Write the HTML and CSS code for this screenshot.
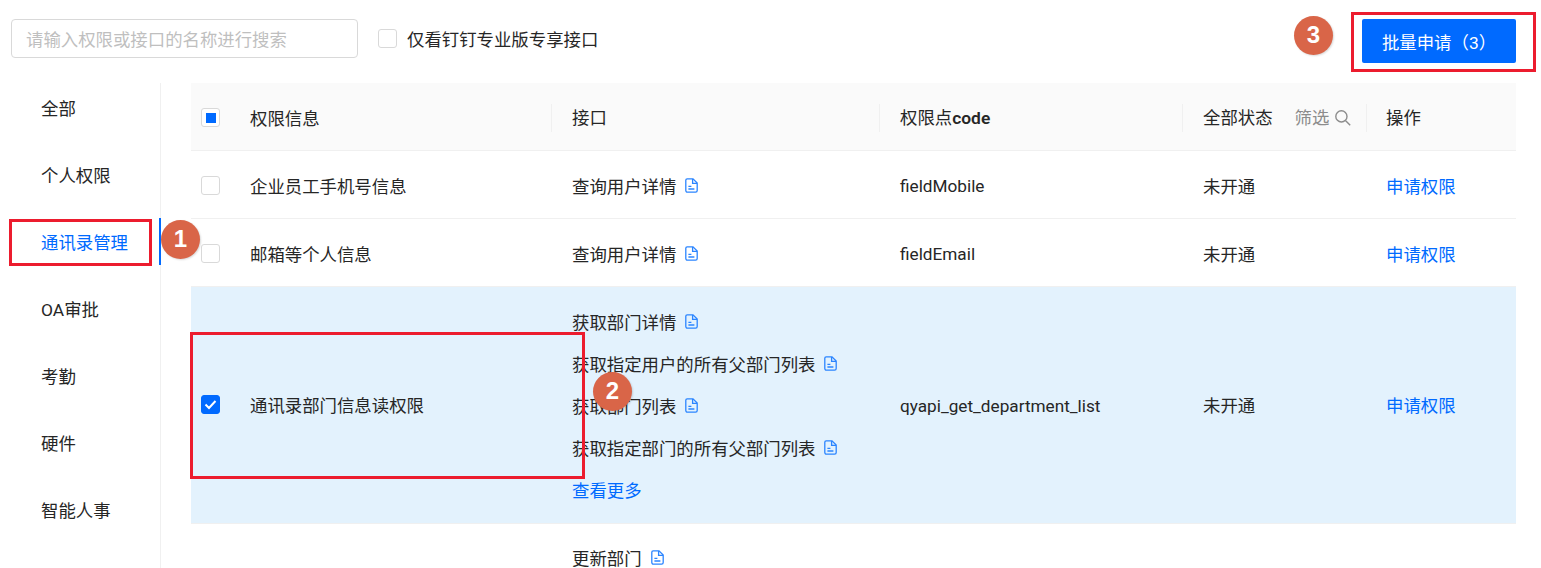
FILE: index.html

```html
<!DOCTYPE html>
<html lang="en">
  <head>
    <meta charset="UTF-8" />
    <title>权限管理</title>
    <link rel="stylesheet" href="styles.css">
  </head>
  <body>
    <svg class="sprite" width="0" height="0">
      <symbol id="doc" viewBox="0 0 13 15">
        <path d="M2.2 .8H8L12.2 5V12.6A1.6 1.6 0 0 1 10.6 14.2H2.4A1.6 1.6 0 0 1 .8 12.6V2.2A1.4 1.4 0 0 1 2.2 .8Z" fill="none" stroke="currentColor" stroke-width="1.3" />
        <path d="M7.6 1V5.4H12M3.4 8.3H6.4M3.4 11H9.4" fill="none" stroke="currentColor" stroke-width="1.3" />
      </symbol>
    </svg>

    <div class="page">
      <div class="toolbar">
        <input class="search" type="text" placeholder="请输入权限或接口的名称进行搜索" />
        <label class="pro-filter">
          <span class="checkbox"></span>
          仅看钉钉专业版专享接口
        </label>
        <button type="button" class="batch-btn">批量申请（3）</button>
      </div>

      <div class="content">
        <ul class="side-menu">
          <li>全部</li>
          <li>个人权限</li>
          <li class="active">通讯录管理</li>
          <li>OA审批</li>
          <li>考勤</li>
          <li>硬件</li>
          <li>智能人事</li>
        </ul>

        <table class="perm-table">
          <colgroup>
            <col class="col-name" />
            <col class="col-api" />
            <col class="col-code" />
            <col class="col-status" />
            <col class="col-op" />
          </colgroup>
          <thead>
            <tr>
              <th>
                <div class="name-cell">
                  <span class="checkbox partial"></span>
                  权限信息
                </div>
              </th>
              <th><div class="head-cell">接口</div></th>
              <th><div class="head-cell">权限点<b>code</b></div></th>
              <th>
                <div class="head-cell status-head">
                  全部状态
                  <span class="filter">
                    筛选
                    <svg width="16" height="16" viewBox="0 0 16 16">
                      <circle cx="6.4" cy="6.4" r="5.6" fill="none" stroke="currentColor" stroke-width="1.4" />
                      <path d="M10.4 10.4L15.2 15.2" fill="none" stroke="currentColor" stroke-width="1.4" />
                    </svg>
                  </span>
                </div>
              </th>
              <th><div class="head-cell">操作</div></th>
            </tr>
          </thead>
          <tbody>
            <tr>
              <td><div class="name-cell"><span class="checkbox"></span>企业员工手机号信息</div></td>
              <td><div class="api">查询用户详情<svg class="doc"><use href="#doc" /></svg></div></td>
              <td class="code-val">fieldMobile</td>
              <td>未开通</td>
              <td><a class="link">申请权限</a></td>
            </tr>
            <tr>
              <td><div class="name-cell"><span class="checkbox"></span>邮箱等个人信息</div></td>
              <td><div class="api">查询用户详情<svg class="doc"><use href="#doc" /></svg></div></td>
              <td class="code-val">fieldEmail</td>
              <td>未开通</td>
              <td><a class="link">申请权限</a></td>
            </tr>
            <tr class="selected">
              <td><div class="name-cell"><span class="checkbox checked">
                <svg width="13" height="11" viewBox="0 0 13 11"><path d="M1.5 5.5L5 9L11.5 2" fill="none" stroke="#fff" stroke-width="2" /></svg>
              </span>通讯录部门信息读权限</div></td>
              <td class="api-list">
                <div class="api">获取部门详情<svg class="doc"><use href="#doc" /></svg></div>
                <div class="api">获取指定用户的所有父部门列表<svg class="doc"><use href="#doc" /></svg></div>
                <div class="api">获取部门列表<svg class="doc"><use href="#doc" /></svg></div>
                <div class="api">获取指定部门的所有父部门列表<svg class="doc"><use href="#doc" /></svg></div>
                <div class="api"><a class="link">查看更多</a></div>
              </td>
              <td class="code-val">qyapi_get_department_list</td>
              <td>未开通</td>
              <td><a class="link">申请权限</a></td>
            </tr>
            <tr class="last-row">
              <td></td>
              <td class="api-list">
                <div class="api">更新部门<svg class="doc"><use href="#doc" /></svg></div>
              </td>
              <td></td>
              <td></td>
              <td></td>
            </tr>
          </tbody>
        </table>
      </div>

      <!-- screenshot annotations -->
      <div class="mark-box box-1"></div>
      <div class="mark-box box-2"></div>
      <div class="mark-box box-3"></div>
      <div class="mark-dot dot-1">1</div>
      <div class="mark-dot dot-2">2</div>
      <div class="mark-dot dot-3">3</div>
    </div>
  </body>
</html>
```

FILE: styles.css

```css
html,
body {
  margin: 0;
  padding: 0;
  height: 100%;
  overflow: hidden;
  background: #fff;
}
.sprite {
  display: block;
  height: 0;
}
.page {
  position: relative;
  width: 1541px;
  height: 568px;
  overflow: hidden;
  font-family: Roboto, "Noto Sans CJK SC", sans-serif;
  font-size: 17.4px;
  color: #262626;
}
.toolbar {
  height: 83px;
  box-sizing: border-box;
  padding: 19px 25px 0 11px;
  display: flex;
  align-items: flex-start;
}
.search {
  width: 347px;
  height: 39px;
  box-sizing: border-box;
  border: 1px solid #d9d9d9;
  border-radius: 4px;
  padding: 2px 14px 0;
  outline: none;
  font-family: inherit;
  font-size: 17.4px;
}
.search::placeholder {
  color: #bfbfbf;
}
.pro-filter {
  margin-left: 20px;
  height: 39px;
  display: flex;
  align-items: center;
  gap: 10px;
}
.checkbox {
  width: 19px;
  height: 19px;
  box-sizing: border-box;
  flex: none;
  display: flex;
  align-items: center;
  justify-content: center;
  border: 1px solid #d9d9d9;
  border-radius: 3px;
  background: #fff;
}
.checkbox.partial::after {
  content: "";
  width: 10px;
  height: 10px;
  background: #006aff;
}
.checkbox.checked {
  border-color: #006aff;
  background: #006aff;
}
.batch-btn {
  margin-left: auto;
  width: 154px;
  height: 44px;
  border: none;
  border-radius: 2px;
  background: #006aff;
  color: #fff;
  font-family: inherit;
  font-size: 17.4px;
  font-weight: 400;
}
.content {
  display: flex;
  align-items: flex-start;
}
.side-menu {
  list-style: none;
  margin: 0;
  padding: 1px 0 0;
  width: 161px;
  height: 485px;
  box-sizing: border-box;
  border-right: 1px solid #f0f0f0;
  flex: none;
}
.side-menu li {
  height: 47px;
  line-height: 51px;
  margin-bottom: 20px;
  padding-left: 41px;
  box-sizing: border-box;
}
.side-menu li.active {
  color: #006aff;
  border-right: 2px solid #006aff;
  margin-right: -1px;
}
.perm-table {
  margin-left: 30px;
  width: 1325px;
  table-layout: fixed;
  border-collapse: collapse;
}
.col-name {
  width: 360px;
}
.col-api {
  width: 328px;
}
.col-code {
  width: 303px;
}
.col-status {
  width: 184px;
}
.col-op {
  width: 150px;
}
th {
  height: 65px;
  padding: 2px 0 0;
  background: #fafafa;
  border-bottom: 1px solid #f0f0f0;
  text-align: left;
  font-weight: 400;
}
th b {
  font-weight: 600;
}
td {
  height: 68px;
  padding: 2px 0 0 21px;
  border-bottom: 1px solid #f0f0f0;
  box-sizing: border-box;
}
td:first-child {
  padding-left: 0;
}
td:last-child {
  padding-left: 20px;
}
.code-val {
  font-size: 17.2px;
}
.name-cell {
  display: flex;
  align-items: center;
  gap: 30px;
  padding-left: 10px;
}
.head-cell {
  height: 28px;
  line-height: 28px;
  border-left: 1px solid #f0f0f0;
  padding-left: 20px;
}
th:last-child .head-cell {
  padding-left: 19px;
}
.status-head {
  display: flex;
}
.filter {
  margin-left: 22px;
  color: #8c8c8c;
  display: flex;
  align-items: center;
  gap: 6px;
}
.selected td {
  background: #e3f2fd;
  padding-top: 0;
  padding-bottom: 2px;
}
.selected .code-val {
  padding-top: 2px;
  padding-bottom: 0;
}
.selected .api-list,
.api-list {
  padding-top: 13px;
  padding-bottom: 13px;
}
.last-row .api-list {
  padding-top: 12px;
}
.api {
  height: 42px;
  display: flex;
  align-items: center;
}
.doc {
  width: 13px;
  height: 15px;
  margin-left: 9px;
  color: #2b85ff;
}
.link {
  color: #006aff;
}
.mark-box {
  position: absolute;
  box-sizing: border-box;
  border: 3px solid #ec1c2e;
}
.box-1 {
  left: 9px;
  top: 219px;
  width: 143px;
  height: 47px;
}
.box-2 {
  left: 190px;
  top: 332px;
  width: 395px;
  height: 147px;
}
.box-3 {
  left: 1351px;
  top: 12px;
  width: 185px;
  height: 60px;
}
.mark-dot {
  position: absolute;
  width: 39px;
  height: 39px;
  border-radius: 50%;
  background: #d96548;
  box-shadow: 1px 1px 2px rgba(0, 0, 0, 0.15);
  color: #fff;
  font-family: "Liberation Sans", sans-serif;
  font-size: 24px;
  font-weight: 700;
  text-align: center;
  line-height: 38px;
}
.dot-1 {
  left: 161px;
  top: 220px;
}
.dot-2 {
  left: 593px;
  top: 372px;
}
.dot-3 {
  left: 1294px;
  top: 16px;
}
```
